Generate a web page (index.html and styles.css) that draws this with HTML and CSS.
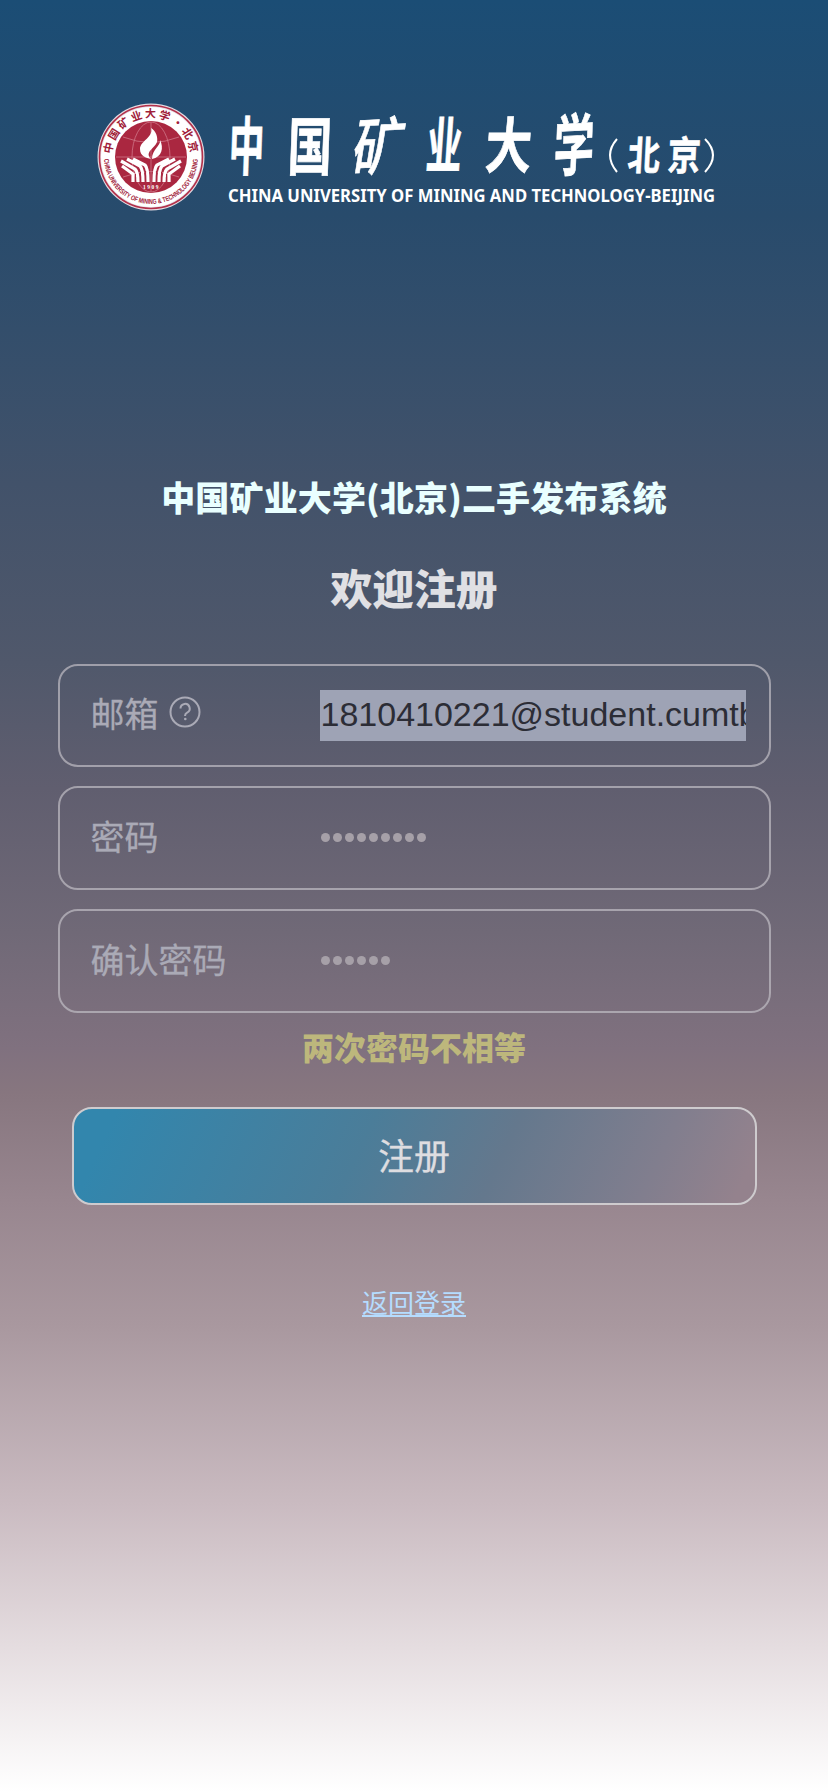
FILE: index.html
```html
<!DOCTYPE html>
<html lang="zh-CN">
<head>
<meta charset="utf-8">
<title>注册</title>
<link rel="stylesheet" href="styles.css">
</head>
<body>
<main class="page">
  <svg class="logo" viewBox="0 0 634 112" role="img" aria-label="中国矿业大学(北京)">
    <defs>
      <path id="ring-top" d="M14.500 54 A39.500 39.500 0 0 1 93.500 54"/>
      <path id="ring-bottom" d="M7 54 A47 47 0 0 0 101 54"/>
    </defs>
    <circle cx="54" cy="54" r="53.500" fill="#e3dce3"/>
    <circle cx="54" cy="54" r="51.500" fill="none" stroke="#b3304a" stroke-width="1.600"/>
    <circle cx="54" cy="54" r="50" fill="#fff"/>
    <circle cx="54" cy="54" r="36" fill="#aa2740"/>
    <g fill="none" stroke="#cf7789" stroke-width=".8">
      <ellipse cx="54" cy="54" rx="19" ry="35"/>
      <path d="M54 19V89M19 54H89M26 34Q54 45 82 34M26 74Q54 63 82 74"/>
    </g>
    <g fill="#fff">
      <path d="M54 25C57 34 43 38 43 46C43 53 49 55 54 56C47 49 58 45 60 39C61 34 59 28 54 25Z"/>
      <path d="M63 37C64 43 55 46 55 56C65 54 67 45 63 37Z"/>
    </g>
    <g fill="none" stroke="#fff" stroke-width="3.200">
      <path d="M24 58L38 66Q41 69 41 79M30 56L43 63Q46 66 46 79M36 56L48 62Q51 65 51 79M25 63L36 71V79"/>
      <path d="M84 58L70 66Q67 69 67 79M78 56L65 63Q62 66 62 79M72 56L60 62Q57 65 57 79M83 63L72 71V79"/>
    </g>
    <path d="M38.500 71V79M43.500 69V79M48.600 68V79M59.400 68V79M64.500 69V79M69.500 71V79" stroke="#aa2740" stroke-width="1"/>
    <text class="seal-year" x="54.500" y="86" text-anchor="middle">1909</text>
    <text class="seal-cn"><textPath href="#ring-top" startOffset="3" textLength="117">中国矿业大学·北京</textPath></text>
    <text class="seal-en"><textPath href="#ring-bottom" startOffset="2" textLength="143" lengthAdjust="spacingAndGlyphs">CHINA UNIVERSITY OF MINING &amp; TECHNOLOGY BEIJING</textPath></text>
    <g class="brush">
      <text transform="translate(131 67) skewX(-2) scale(.66 1.180)">中</text>
      <text transform="translate(190 67) skewX(-2) scale(.82 1.180)">国</text>
      <text class="brush-thin" transform="translate(253 68) rotate(-3) skewX(-12) scale(.94 1.160)">矿</text>
      <text transform="translate(328 65) skewX(-4) scale(.66 1.130)">业</text>
      <text transform="translate(387 65) skewX(-4) scale(.86 1.120)">大</text>
      <text transform="translate(456 68) rotate(-3) skewX(-5) scale(.75 1.240)">学</text>
      <text class="brush-small" transform="translate(530 67) skewX(-3) scale(.85 1.050)">北</text>
      <text class="brush-small" transform="translate(570 67) skewX(-3) scale(.87 1.050)">京</text>
    </g>
    <path d="M520 36Q506 52 520 69M608 36Q624 52 608 69" fill="none" stroke="#fff" stroke-width="2"/>
    <text class="logo-en" x="131" y="99" textLength="487" lengthAdjust="spacingAndGlyphs">CHINA UNIVERSITY OF MINING AND TECHNOLOGY-BEIJING</text>
  </svg>

  <h1 class="title">中国矿业大学(北京)二手发布系统</h1>
  <h2 class="welcome">欢迎注册</h2>

  <form class="form">
    <div class="field field-mail">
      <label class="label">邮箱
        <svg class="help" viewBox="0 0 32 32"><circle cx="16" cy="16" r="14.500"/><path d="M11.500 12.500a4.600 4.600 0 1 1 6.600 4.100Q16 17.700 16 20"/><circle class="help-dot" cx="16.300" cy="23" r="1.300"/></svg>
      </label>
      <div class="value mail">1810410221@student.cumtb.edu.cn</div>
    </div>
    <div class="field">
      <label class="label">密码</label>
      <div class="value dots"><i></i><i></i><i></i><i></i><i></i><i></i><i></i><i></i><i></i></div>
    </div>
    <div class="field">
      <label class="label">确认密码</label>
      <div class="value dots"><i></i><i></i><i></i><i></i><i></i><i></i></div>
    </div>
    <p class="error">两次密码不相等</p>
    <button class="submit" type="button">注册</button>
  </form>
  <a class="back" href="#">返回登录</a>
</main>
</body>
</html>
```
FILE: styles.css
```css
* { box-sizing: border-box; }
body { margin: 0; }
.page {
  height: 1792px;
  padding-top: 102.500px;
  display: flex;
  flex-direction: column;
  align-items: center;
  overflow: hidden;
  font-family: "Noto Sans CJK SC", sans-serif;
  background: linear-gradient(180deg, #1b4d75 0%, #284b6c 12%, #42526a 27%, #50586b 37%, #605e6f 44%, #706977 52%, #80717f 58.500%, #87767f 61%, #98868f 67%, #a9989f 74%, #cabbc1 84%, #e5dde0 92%, #fff 100%);
}
.logo { width: 634px; height: 112px; display: block; overflow: visible; }
.brush { fill: #fff; stroke: #fff; stroke-width: .6; font-size: 54px; font-weight: 700; }
.brush-thin { font-weight: 500; }
.brush-small { font-size: 38px; }
.logo-en { fill: #fff; font: 700 18.500px "Noto Sans", sans-serif; }
.seal-cn { fill: #a02039; font-size: 11px; font-weight: 700; }
.seal-en { fill: #a02039; font: 700 7px "Liberation Sans", sans-serif; }
.seal-year { fill: #fff; font: 700 5.500px "Liberation Serif", serif; letter-spacing: 1.500px; }
.title {
  margin: 257.500px 0 0;
  height: 50px;
  line-height: 50px;
  font-size: 34px;
  letter-spacing: .15px;
  font-weight: 900;
  color: #e9ffff;
}
.welcome {
  margin: 35px 0 0;
  height: 60px;
  line-height: 60px;
  font-size: 41.800px;
  font-weight: 900;
  color: #e0e0e4;
}
.form {
  width: 713px;
  margin-top: 47px;
  display: flex;
  flex-direction: column;
  align-items: center;
}
.field {
  width: 100%;
  height: 104px;
  margin-bottom: 19px;
  padding: 0 23px 0 31px;
  display: flex;
  align-items: center;
  border: 2px solid rgba(192, 190, 196, .7);
  border-radius: 20px;
}
.field-mail { height: 103px; }
.label {
  width: 229px;
  margin-top: -5px;
  display: flex;
  align-items: center;
  gap: 10px;
  font-size: 34px;
  line-height: 50px;
  color: #aaaab6;
  -webkit-text-stroke: .3px #aaaab6;
}
.help { width: 32px; height: 32px; margin-top: -2px; fill: none; stroke: #aaaab6; stroke-width: 2; }
.help-dot { fill: #aaaab6; stroke: none; }
.value { width: 426px; height: 51px; overflow: hidden; }
.mail {
  padding-left: 1px;
  background: #9ea3b5;
  color: #2c2d36;
  font: 34px/48px "Liberation Sans", Arial, sans-serif;
  white-space: nowrap;
}
.dots { display: flex; align-items: center; gap: 3px; padding: 0 0 2px 1px; }
.dots i { width: 9px; height: 9px; border-radius: 50%; background: #a6a0a8; }
.error {
  margin: -10px 0 0;
  height: 48px;
  line-height: 48px;
  font-size: 32px;
  font-weight: 900;
  color: #bdb77c;
}
.submit {
  width: 685px;
  height: 98px;
  margin-top: 37px;
  padding: 0 0 5px;
  border: 2px solid #cecbce;
  border-radius: 20px;
  background: linear-gradient(115deg, #3286ad 6%, #4b7d99 42%, #64788d 62%, #817e8e 84%, #94828d 97%);
  color: #dedde0;
  font: 36px "Noto Sans CJK SC", sans-serif;
  -webkit-text-stroke: .3px #dedde0;
}
.back {
  margin-top: 78px;
  font-size: 26px;
  line-height: 38px;
  color: #b5dcff;
  text-decoration: underline;
}
```
